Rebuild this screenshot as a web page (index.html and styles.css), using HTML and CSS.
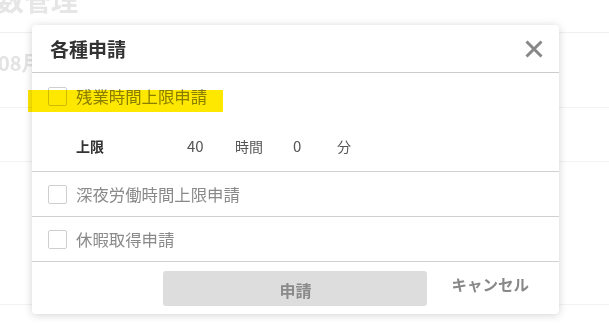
FILE: index.html
```html
<!DOCTYPE html>
<html lang="ja">
<head>
<meta charset="utf-8">
<link rel="stylesheet" href="styles.css">
</head>
<body>
<div class="page">
  <div class="page-head"><h1 class="page-title">工数管理</h1></div>
  <div class="page-row page-row-month"><span class="month">08月</span></div>
  <div class="page-row page-row-a"></div>
  <div class="page-row page-row-b"></div>
</div>

<div class="modal">
  <div class="modal-header">
    <h2 class="modal-title">各種申請</h2>
    <svg class="close" width="18" height="18" viewBox="0 0 18 18">
      <path d="M1.5 1.5 L16.5 16.5 M16.5 1.5 L1.5 16.5" stroke="#888" stroke-width="3" fill="none"/>
    </svg>
  </div>
  <div class="opt opt-first">
    <label class="check-line"><span class="box"></span><span class="label">残業時間上限申請</span></label>
    <div class="limit">
      <span class="limit-name">上限</span>
      <span class="limit-hours">40</span>
      <span class="limit-unit-h">時間</span>
      <span class="limit-mins">0</span>
      <span class="limit-unit-m">分</span>
    </div>
  </div>
  <div class="opt">
    <label class="check-line"><span class="box"></span><span class="label">深夜労働時間上限申請</span></label>
  </div>
  <div class="opt">
    <label class="check-line"><span class="box"></span><span class="label">休暇取得申請</span></label>
  </div>
  <div class="modal-footer">
    <button class="btn-submit" type="button">申請</button>
    <button class="btn-cancel" type="button">キャンセル</button>
  </div>
</div>

<div class="highlight"></div>
</body>
</html>
```

FILE: styles.css
```css
* { box-sizing: border-box; }

html, body {
  margin: 0;
  padding: 0;
}

body {
  width: 609px;
  height: 331px;
  overflow: hidden;
  background: #fff;
  font-family: "Noto Sans CJK JP", "Noto Sans", sans-serif;
  position: relative;
}

/* background page */
.page {
  width: 609px;
  display: flow-root;
}

.page-head {
  display: flow-root;
  height: 33px;
  border-bottom: 1px solid #f0f0f0;
}

.page-title {
  margin: -13px 0 0 -30px;
  font-size: 27px;
  line-height: 26px;
  font-weight: 700;
  color: #e6e6e6;
  white-space: nowrap;
}

.page-row {
  border-bottom: 1px solid #f2f2f2;
}

.page-row-month {
  height: 75px;
  padding-top: 20px;
}

.month {
  display: block;
  margin-left: -2px;
  font-size: 20px;
  line-height: 20px;
  font-weight: 700;
  color: #e3e3e3;
}

.page-row-a { height: 54px; }
.page-row-b { height: 143px; }

/* modal */
.modal {
  position: absolute;
  left: 32px;
  top: 25px;
  width: 527px;
  background: #fff;
  border-radius: 4px;
  box-shadow: 0 1px 8px rgba(0, 0, 0, 0.18);
  display: flex;
  flex-direction: column;
}

.modal-header {
  height: 48px;
  border-bottom: 1px solid #cccccc;
  display: flex;
  align-items: center;
  justify-content: space-between;
  padding: 1px 16px 0 18px;
}

.modal-title {
  margin: 0;
  font-size: 19px;
  line-height: 24px;
  font-weight: 700;
  color: #333;
}

.close {
  display: block;
}

.opt {
  border-bottom: 1px solid #d0d0d0;
  padding: 0 16px;
  height: 45px;
  display: flex;
  flex-direction: column;
  justify-content: center;
}

.opt-first {
  height: 99px;
  justify-content: flex-start;
  padding-top: 13px;
}

.check-line {
  display: flex;
  align-items: center;
  gap: 9px;
  height: 20px;
}

.box {
  width: 19px;
  height: 19px;
  border: 1px solid #cfcfcf;
  border-radius: 2px;
  background: #fff;
  flex: none;
}

.label {
  font-size: 16.4px;
  line-height: 20px;
  color: #8a8a8a;
  white-space: nowrap;
}

.limit {
  display: flex;
  align-items: center;
  margin: 30px 0 0 28px;
  height: 20px;
  font-size: 14px;
  line-height: 20px;
  color: #555;
}

.limit-name {
  width: 111px;
  font-weight: 700;
  color: #333;
  font-size: 14px;
}

.limit-hours { width: 48px; font-size: 15px; }
.limit-unit-h { width: 58px; }
.limit-mins { width: 44px; font-size: 15px; }

.modal-footer {
  display: flex;
  justify-content: flex-end;
  align-items: flex-start;
  padding: 9px 30px 8px 0;
}

.btn-submit {
  width: 264px;
  height: 35px;
  margin: 0 24px 0 0;
  border: 0;
  border-radius: 3px;
  background: #dddddd;
  color: #8a8a8a;
  font-family: inherit;
  font-size: 16px;
  font-weight: 700;
  padding: 2px 0 0;
}

.btn-cancel {
  border: 0;
  background: none;
  padding: 0;
  margin: 0;
  height: 26px;
  line-height: 26px;
  font-family: inherit;
  font-size: 15.5px;
  font-weight: 700;
  color: #888;
}

/* annotation highlight over the first option */
.highlight {
  position: absolute;
  left: 28px;
  top: 90px;
  width: 195px;
  height: 22px;
  background: #ffe800;
  mix-blend-mode: multiply;
}
```
